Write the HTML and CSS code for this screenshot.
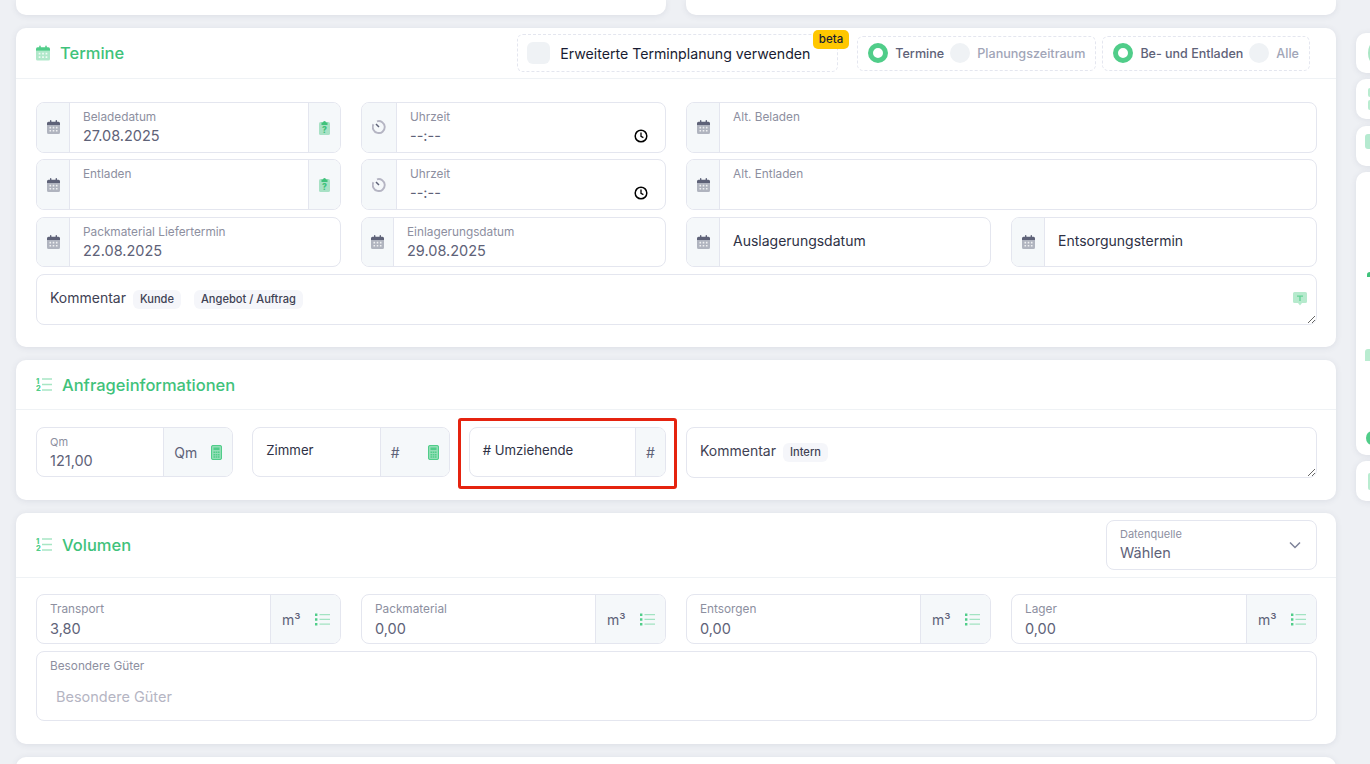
FILE: index.html
```html
<!DOCTYPE html>
<html lang="de">
  <head>
    <meta charset="UTF-8" />
    <meta name="viewport" content="width=device-width, initial-scale=1.0" />
    <title>Termine</title>
    <link rel="stylesheet" href="styles.css">
  </head>
  <body>
    <svg class="icon-defs" aria-hidden="true">
      <symbol id="i-cal" viewBox="0 0 13 14">
        <path opacity=".45" d="M0 5h13v7.5a1.5 1.5 0 0 1-1.5 1.5h-10A1.5 1.5 0 0 1 0 12.5z"/>
        <path d="M0 5V3.2a1.5 1.5 0 0 1 1.5-1.5H3v-1a.7.7 0 0 1 1.4 0v1h4.2v-1a.7.7 0 0 1 1.4 0v1h1.5A1.5 1.5 0 0 1 13 3.2V5z"/>
        <path fill="#fff" opacity=".8" d="M2.5 6.8h1.6v1.6H2.5zM5.7 6.8h1.6v1.6H5.7zM8.9 6.8h1.6v1.6H8.9zM2.5 10h1.6v1.6H2.5zM5.7 10h1.6v1.6H5.7zM8.9 10h1.6v1.6H8.9z"/>
      </symbol>
      <symbol id="i-clip" viewBox="0 0 11 15">
        <rect opacity=".42" y="2" width="11" height="13" rx="1.6"/>
        <path d="M2.5 5V2.600h1.500a1.500 1.500 0 0 1 3 0h1.500V5z"/>
        <text x="5.5" y="13" font-size="8.500" font-weight="800" text-anchor="middle">?</text>
      </symbol>
      <symbol id="i-dial" viewBox="0 0 14 14">
        <path fill="none" stroke="#b5b5c3" stroke-width="1.900" d="M5 1.300a6 6 0 1 1-3.600 3"/>
        <path fill="none" stroke="#5e6278" stroke-width="1.500" d="M4 4l3 3"/>
      </symbol>
      <symbol id="i-clock" viewBox="0 0 14 14">
        <circle cx="7" cy="7" r="5.800" fill="none" stroke="#000" stroke-width="1.500"/>
        <path fill="none" stroke="#000" stroke-width="1.300" d="M7 3.600V7.400l2.400 1.200"/>
      </symbol>
      <symbol id="i-calc" viewBox="0 0 11 15">
        <rect opacity=".6" width="11" height="15" rx="2"/>
        <path fill="none" stroke="currentColor" d="M.5 2A1.500 1.500 0 0 1 2 .5h7A1.500 1.500 0 0 1 10.500 2v11a1.500 1.500 0 0 1-1.500 1.500H2A1.500 1.500 0 0 1 .5 13z"/>
        <path d="M2.500 2.500h6v2.500h-6zM2.500 6.500h1.600v1.500H2.500zM4.700 6.500h1.600v1.500H4.700zM6.900 6.500h1.600v1.500H6.900zM2.500 9h1.600v1.500H2.500zM4.700 9h1.600v1.500H4.700zM6.900 9h1.600v1.500H6.900zM2.500 11.300h1.600v1.500H2.500zM4.700 11.300h1.600v1.500H4.700zM6.900 11.300h1.600v1.500H6.900z"/>
      </symbol>
      <symbol id="i-list" viewBox="0 0 15 13">
        <path d="M0 .6h2.400v2.400H0zM0 5.300h2.400v2.400H0zM0 10h2.400v2.400H0z"/>
        <path opacity=".5" d="M4.500 1h10.500v1.300H4.500zM4.500 5.800h10.500v1.300H4.500zM4.500 10.500h10.500v1.300H4.500z"/>
      </symbol>
      <symbol id="i-num" viewBox="0 0 16 14">
        <text x="0" y="6.200" font-size="7.500" font-weight="800">1</text>
        <text x="0" y="13.800" font-size="7.500" font-weight="800">2</text>
        <path opacity=".5" d="M6 .7h10v1.500H6zM6 6.200h10v1.500H6zM6 11.800h10v1.500H6z"/>
      </symbol>
      <symbol id="i-note" viewBox="0 0 14 14">
        <path opacity=".42" d="M1.500 0h11A1.500 1.500 0 0 1 14 1.500v8a1.500 1.500 0 0 1-1.500 1.500H9l-2 2.500L5 11H1.500A1.500 1.500 0 0 1 0 9.500v-8A1.500 1.500 0 0 1 1.500 0z"/>
        <path opacity=".8" d="M4 3.500h6v1.200H7.700V9H6.300V4.700H4z"/>
      </symbol>
    </svg>

    <div class="page">
      <main class="main-col">
        <div class="top-row">
          <div class="card card-cut"></div>
          <div class="card card-cut"></div>
        </div>

        <section class="card">
          <header class="card-head head-termine">
            <div class="card-title">
              <svg class="title-icon cal-green"><use href="#i-cal"/></svg>
              <h2>Termine</h2>
            </div>
            <div class="head-tools">
              <label class="dash-box check-box">
                <span class="check"></span>
                <span class="check-text">Erweiterte Terminplanung verwenden</span>
                <span class="beta">beta</span>
              </label>
              <div class="dash-box radio-box">
                <span class="radio on"></span><span class="radio-text on">Termine</span>
                <span class="radio"></span><span class="radio-text">Planungszeitraum</span>
              </div>
              <div class="dash-box radio-box">
                <span class="radio on"></span><span class="radio-text on strong">Be- und Entladen</span>
                <span class="radio"></span><span class="radio-text">Alle</span>
              </div>
            </div>
          </header>
          <div class="card-body">
            <div class="date-grid">
              <div class="field">
                <span class="addon"><svg class="ico-cal"><use href="#i-cal"/></svg></span>
                <div class="input-area"><span class="label">Beladedatum</span><span class="value">27.08.2025</span></div>
                <span class="addon"><svg class="ico-clip"><use href="#i-clip"/></svg></span>
              </div>
              <div class="field">
                <span class="addon wide"><svg class="ico-dial"><use href="#i-dial"/></svg></span>
                <div class="input-area"><span class="label">Uhrzeit</span><span class="value">--:--</span></div>
                <svg class="ico-clock"><use href="#i-clock"/></svg>
              </div>
              <div class="field span-2">
                <span class="addon"><svg class="ico-cal"><use href="#i-cal"/></svg></span>
                <div class="input-area"><span class="label">Alt. Beladen</span></div>
              </div>

              <div class="field">
                <span class="addon"><svg class="ico-cal"><use href="#i-cal"/></svg></span>
                <div class="input-area"><span class="label">Entladen</span></div>
                <span class="addon"><svg class="ico-clip"><use href="#i-clip"/></svg></span>
              </div>
              <div class="field">
                <span class="addon wide"><svg class="ico-dial"><use href="#i-dial"/></svg></span>
                <div class="input-area"><span class="label">Uhrzeit</span><span class="value">--:--</span></div>
                <svg class="ico-clock"><use href="#i-clock"/></svg>
              </div>
              <div class="field span-2">
                <span class="addon"><svg class="ico-cal"><use href="#i-cal"/></svg></span>
                <div class="input-area"><span class="label">Alt. Entladen</span></div>
              </div>

              <div class="field">
                <span class="addon"><svg class="ico-cal"><use href="#i-cal"/></svg></span>
                <div class="input-area"><span class="label">Packmaterial Liefertermin</span><span class="value">22.08.2025</span></div>
              </div>
              <div class="field">
                <span class="addon narrow"><svg class="ico-cal"><use href="#i-cal"/></svg></span>
                <div class="input-area"><span class="label">Einlagerungsdatum</span><span class="value">29.08.2025</span></div>
              </div>
              <div class="field">
                <span class="addon"><svg class="ico-cal"><use href="#i-cal"/></svg></span>
                <div class="input-area center"><span class="plain">Auslagerungsdatum</span></div>
              </div>
              <div class="field">
                <span class="addon"><svg class="ico-cal"><use href="#i-cal"/></svg></span>
                <div class="input-area center"><span class="plain">Entsorgungstermin</span></div>
              </div>

              <div class="note-field span-4">
                <textarea class="note-input" aria-label="Kommentar"></textarea>
                <div class="note-label">
                  <span class="note-text">Kommentar</span>
                  <span class="tag">Kunde</span>
                  <span class="tag">Angebot / Auftrag</span>
                </div>
                <svg class="ico-note"><use href="#i-note"/></svg>
              </div>
            </div>
          </div>
        </section>

        <section class="card">
          <header class="card-head head-info">
            <div class="card-title">
              <svg class="title-icon num-green"><use href="#i-num"/></svg>
              <h2>Anfrageinformationen</h2>
            </div>
          </header>
          <div class="card-body info-body">
            <div class="info-row">
              <div class="info-trio">
                <div class="field">
                  <div class="input-area"><span class="label small">Qm</span><span class="value">121,00</span></div>
                  <span class="addon unit"><span class="unit-text">Qm</span><svg class="ico-calc"><use href="#i-calc"/></svg></span>
                </div>
                <div class="field">
                  <div class="input-area top"><span class="plain">Zimmer</span></div>
                  <span class="addon unit"><span class="unit-text hash">#</span><svg class="ico-calc"><use href="#i-calc"/></svg></span>
                </div>
                <div class="field marked">
                  <div class="input-area top"><span class="plain"># Umziehende</span></div>
                  <span class="addon"><span class="unit-text hash">#</span></span>
                </div>
              </div>
              <div class="note-field">
                <textarea class="note-input" aria-label="Kommentar"></textarea>
                <div class="note-label">
                  <span class="note-text">Kommentar</span>
                  <span class="tag">Intern</span>
                </div>
              </div>
            </div>
          </div>
        </section>

        <section class="card">
          <header class="card-head head-volume">
            <div class="card-title">
              <svg class="title-icon num-green"><use href="#i-num"/></svg>
              <h2>Volumen</h2>
            </div>
            <div class="select-field">
              <div><span class="label small">Datenquelle</span><span class="value">Wählen</span></div>
              <svg class="ico-chevron" viewBox="0 0 12 8"><path d="M1 1.500l5 5 5-5" fill="none" stroke="#7e8299" stroke-width="1.500"/></svg>
            </div>
          </header>
          <div class="card-body volume-body">
            <div class="date-grid">
              <div class="field">
                <div class="input-area"><span class="label">Transport</span><span class="value">3,80</span></div>
                <span class="addon unit vol"><span class="unit-text">m³</span><svg class="ico-list"><use href="#i-list"/></svg></span>
              </div>
              <div class="field">
                <div class="input-area"><span class="label">Packmaterial</span><span class="value">0,00</span></div>
                <span class="addon unit vol"><span class="unit-text">m³</span><svg class="ico-list"><use href="#i-list"/></svg></span>
              </div>
              <div class="field">
                <div class="input-area"><span class="label">Entsorgen</span><span class="value">0,00</span></div>
                <span class="addon unit vol"><span class="unit-text">m³</span><svg class="ico-list"><use href="#i-list"/></svg></span>
              </div>
              <div class="field">
                <div class="input-area"><span class="label">Lager</span><span class="value">0,00</span></div>
                <span class="addon unit vol"><span class="unit-text">m³</span><svg class="ico-list"><use href="#i-list"/></svg></span>
              </div>
              <div class="goods-field span-4">
                <span class="label">Besondere Güter</span>
                <span class="placeholder">Besondere Güter</span>
              </div>
            </div>
          </div>
        </section>

        <section class="card card-next"></section>
      </main>

      <!-- rechte Leiste, fast ganz abgeschnitten -->
      <aside class="side-col">
        <div class="side-card"><span class="bit bit-a"></span></div>
        <div class="side-card"><span class="bit bit-b"></span><span class="bit bit-b"></span></div>
        <div class="side-card"><span class="bit bit-c"></span></div>
        <div class="side-card side-tall">
          <span class="bit bit-arrow"></span>
          <span class="bit bit-up"></span>
          <span class="bit bit-round"></span>
        </div>
        <div class="side-card"><span class="bit bit-d"></span></div>
      </aside>
    </div>
  </body>
</html>
```

FILE: styles.css
```css
* {
  box-sizing: border-box;
}

html,
body {
  height: 100%;
  margin: 0;
  overflow: hidden;
}

body {
  font-family: Inter, "Noto Sans", sans-serif;
  background-color: #eef0f4;
  color: #5e6278;
}

.icon-defs {
  display: none;
}

svg {
  fill: currentColor;
  flex: none;
}

svg text {
  font-family: Inter, sans-serif;
}

.page {
  display: flex;
  gap: 20px;
  padding-left: 16px;
  width: 1500px;
}

.main-col {
  width: 1320px;
  display: flex;
  flex-direction: column;
  gap: 13px;
}

.top-row {
  display: flex;
  gap: 20px;
  height: 15px;
}

.card {
  background-color: #fff;
  border-radius: 10px;
  box-shadow: 0 1px 6px rgba(60, 70, 100, 0.1);
}

.card-cut {
  flex: 1;
  border-radius: 0 0 10px 10px;
}

.card-next {
  height: 80px;
}

.card-head {
  display: flex;
  align-items: center;
  justify-content: space-between;
  padding: 0 19px 0 20px;
  border-bottom: 1px solid #eff2f5;
}

.head-termine {
  height: 51px;
  padding-right: 26px;
}

.head-info {
  height: 50px;
  padding-top: 1px;
}

.head-volume {
  height: 65px;
}

.card-title {
  display: flex;
  align-items: center;
}

.card-title h2 {
  margin: 0;
  font-size: 16.5px;
  font-weight: 450;
  color: #3fc27b;
}

.title-icon {
  margin-right: 10px;
}

.cal-green {
  width: 14px;
  height: 16px;
  color: #50cd89;
}

.num-green {
  width: 16px;
  height: 15px;
  color: #50cd89;
}

.head-tools {
  display: flex;
  align-items: center;
  gap: 6px;
}

.dash-box {
  display: flex;
  align-items: center;
  border: 1px dashed #e4e6ef;
  border-radius: 6px;
}

.check-box {
  position: relative;
  height: 38px;
  width: 321px;
  padding-left: 9px;
  margin-right: 13px;
}

.check {
  width: 23px;
  height: 22px;
  border-radius: 6px;
  background-color: #eff2f5;
  margin-right: 10px;
}

.check-text {
  font-size: 14.15px;
  font-weight: 400;
  color: #181c32;
}

.beta {
  position: absolute;
  top: -5px;
  right: -12px;
  padding: 2px 6px;
  height: 19px;
  border-radius: 5px;
  background-color: #ffc700;
  color: #181c32;
  font-size: 11.5px;
  font-weight: 500;
  line-height: 15px;
}

.radio-box {
  height: 35px;
  padding: 0 10px;
}

.radio {
  width: 20px;
  height: 20px;
  border-radius: 50%;
  background-color: #eff2f5;
  margin-right: 7px;
}

.radio.on {
  background-color: #fff;
  border: 5.5px solid #50cd89;
}

.radio-text {
  font-size: 12.6px;
  font-weight: 500;
  color: #a1a5b7;
  margin-right: 6px;
}

.radio-text:last-child {
  margin-right: 0;
}

.radio-text.on {
  color: #5e6278;
}

.radio-text.strong {
  font-size: 12.5px;
}

.card-body {
  padding: 23px 19px 22px 20px;
}

.info-body {
  padding-top: 17px;
}

.volume-body {
  padding-top: 16px;
  padding-bottom: 23px;
}

.date-grid {
  display: grid;
  grid-template-columns: 305px 305px 305px 1fr;
  column-gap: 20px;
  row-gap: 6.7px;
}

.span-2 {
  grid-column: span 2;
}

.span-4 {
  grid-column: span 4;
}

.field {
  position: relative;
  display: flex;
  align-items: stretch;
  height: 50.6px;
  border: 1px solid #e4e6ef;
  border-radius: 8px;
  background-color: #fff;
}

.addon {
  display: flex;
  align-items: center;
  justify-content: center;
  flex: none;
  width: 33px;
  background-color: #f5f8fa;
}

.addon:first-child {
  border-right: 1px solid #e4e6ef;
  border-radius: 7px 0 0 7px;
}

.addon:last-child {
  width: 32px;
  border-left: 1px solid #e4e6ef;
  border-radius: 0 7px 7px 0;
}

.addon.wide {
  width: 35px;
}

.addon.narrow {
  width: 32px;
}

.addon.unit {
  width: 69px;
  justify-content: space-between;
  padding: 0 10px;
}

.addon.vol {
  width: 70px;
  padding-left: 11px;
}

.marked .addon:last-child {
  width: 30px;
}

.unit-text {
  font-size: 14px;
  font-weight: 400;
  color: #5e6278;
}

.input-area {
  flex: 1;
  min-width: 0;
  display: flex;
  flex-direction: column;
  padding: 7px 13px 0;
}

.input-area.center {
  justify-content: center;
  padding: 0 13px 2px;
}

.input-area.top {
  padding-top: 14px;
}

.label {
  display: block;
  font-size: 11.8px;
  line-height: 15px;
  color: #8d8f9f;
  margin-bottom: 1px;
}

.label.small {
  font-size: 11px;
}

.value {
  display: block;
  font-size: 14.5px;
  line-height: 20px;
  color: #5e6278;
}

.volume-body .label {
  margin-bottom: 2px;
}

.plain {
  font-size: 14px;
  font-weight: 400;
  color: #2e3145;
}

.input-area.top .plain {
  font-size: 13.2px;
}

.ico-cal {
  width: 13px;
  height: 14px;
  color: #5e6278;
}

.ico-clip {
  width: 11px;
  height: 15px;
  color: #3fc27b;
}

.ico-dial {
  width: 14px;
  height: 14px;
}

.ico-clock {
  position: absolute;
  right: 17px;
  top: 26px;
  width: 14px;
  height: 14px;
}

.ico-calc {
  width: 11px;
  height: 15px;
  color: #50cd89;
}

.ico-list {
  width: 15px;
  height: 13px;
  color: #50cd89;
}

.ico-note {
  position: absolute;
  right: 10px;
  top: 18px;
  width: 14px;
  height: 14px;
  color: #50cd89;
}

.ico-chevron {
  width: 12px;
  height: 8px;
}

.note-field {
  position: relative;
  height: 51px;
  min-width: 0;
}

.note-input {
  display: block;
  width: 100%;
  height: 100%;
  border: 1px solid #e4e6ef;
  border-radius: 8px;
  background-color: #fff;
  outline: none;
}

/* Label liegt ueber dem Textfeld */
.note-label {
  position: absolute;
  left: 14px;
  top: 16px;
  display: flex;
  align-items: center;
  gap: 13px;
}

.note-text {
  font-size: 14px;
  font-weight: 400;
  color: #3f4254;
  margin-right: -6px;
  position: relative;
  top: -2px;
}

.tag {
  height: 19px;
  padding: 0 7px;
  border-radius: 6px;
  background-color: #f5f6fa;
  font-size: 11.1px;
  font-weight: 500;
  line-height: 19px;
  color: #3f4254;
}

.info-row {
  display: grid;
  grid-template-columns: 630px 1fr;
  column-gap: 20px;
}

.info-trio {
  display: grid;
  grid-template-columns: repeat(3, 1fr);
  column-gap: 19px;
}

.marked::after {
  content: "";
  position: absolute;
  left: -12px;
  right: -12px;
  top: -10px;
  bottom: -13px;
  border: 3px solid #e5230f;
  border-radius: 3px;
}

.select-field {
  display: flex;
  align-items: center;
  justify-content: space-between;
  width: 211px;
  height: 50px;
  padding: 1px 15px 0 13px;
  border: 1px solid #e4e6ef;
  border-radius: 8px;
}

.goods-field {
  height: 70px;
  padding: 7px 13px 0;
  border: 1px solid #e4e6ef;
  border-radius: 8px;
}

.placeholder {
  display: block;
  margin: 13px 0 0 6px;
  font-size: 14.5px;
  line-height: 20px;
  color: #b5b5c3;
}

.side-col {
  width: 120px;
  padding-top: 33px;
  display: flex;
  flex-direction: column;
  gap: 6.3px;
}

.side-card {
  position: relative;
  height: 40px;
  background-color: #fff;
  border-radius: 10px;
  box-shadow: 0 1px 6px rgba(60, 70, 100, 0.1);
}

.side-tall {
  height: 283px;
}

/* abgeschnittene Icons am rechten Rand */
.bit {
  position: absolute;
  display: block;
}

.bit-a {
  left: 12px;
  top: 10px;
  width: 10px;
  height: 20px;
  border-radius: 50%;
  background-color: #a9e6c4;
}

.bit-b {
  left: 12px;
  top: 9px;
  width: 10px;
  height: 9px;
  border-radius: 2px;
  background-color: #b9ecd0;
}

.bit-b + .bit-b {
  top: 21px;
  height: 10px;
}

.bit-c {
  left: 9px;
  top: 8px;
  width: 12px;
  height: 15px;
  border-radius: 3px;
  background-color: #b5ead0;
}

.bit-arrow {
  left: 11px;
  top: 100px;
  width: 6px;
  height: 5px;
  background-color: #3fc27b;
  border-radius: 50% 0 0 0;
}

.bit-up {
  left: 9px;
  top: 177px;
  width: 8px;
  height: 12px;
  background-color: #b9ecd0;
  border-radius: 3px 0 0 0;
}

.bit-round {
  left: 10px;
  top: 259px;
  width: 12px;
  height: 14px;
  border-radius: 50%;
  background-color: #50cd89;
}

.bit-d {
  left: 12px;
  top: 12px;
  width: 10px;
  height: 17px;
  border-radius: 2px;
  background-color: #b9ecd0;
}
```
